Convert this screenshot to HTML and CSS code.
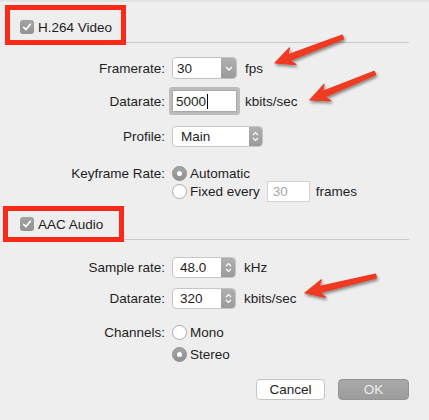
FILE: index.html
```html
<!DOCTYPE html>
<html>
<head>
<meta charset="utf-8">
<link rel="stylesheet" href="styles.css">
</head>
<body>
<div class="win">
  <div class="head head1">
    <label class="hl hl1"><span class="cb"><svg width="10" height="10" viewBox="0 0 10 10"><path d="M1.6 5.3 L4 7.6 L8.4 2.2" fill="none" stroke="#fff" stroke-width="1.6" stroke-linecap="round" stroke-linejoin="round"/></svg></span>H.264 Video</label>
  </div>

  <div class="row r1">
    <span class="lbl">Framerate:</span>
    <div class="combo"><span class="val">30</span><span class="cbtn"><svg width="8" height="5" viewBox="0 0 8 5"><path d="M1 1 L4 4 L7 1" fill="none" stroke="#fff" stroke-width="1.3"/></svg></span></div>
    <span class="unit">fps</span>
  </div>

  <div class="row r2">
    <span class="lbl">Datarate:</span>
    <div class="field focus"><span class="val">5000</span><span class="caret"></span></div>
    <span class="unit">kbits/sec</span>
  </div>

  <div class="row r3">
    <span class="lbl">Profile:</span>
    <div class="popup"><span class="val">Main</span><span class="cbtn"><svg width="7" height="11" viewBox="0 0 7 11"><path d="M1 4 L3.5 1.5 L6 4 M1 7 L3.5 9.5 L6 7" fill="none" stroke="#fff" stroke-width="1.2"/></svg></span></div>
  </div>

  <div class="row r4">
    <span class="lbl">Keyframe Rate:</span>
    <span class="radio on"></span><span class="rtext">Automatic</span>
  </div>

  <div class="row r5">
    <span class="lbl"></span>
    <span class="radio"></span><span class="rtext">Fixed every</span>
    <div class="small">30</div>
    <span class="unit2">frames</span>
  </div>

  <div class="head head2">
    <label class="hl hl2"><span class="cb"><svg width="10" height="10" viewBox="0 0 10 10"><path d="M1.6 5.3 L4 7.6 L8.4 2.2" fill="none" stroke="#fff" stroke-width="1.6" stroke-linecap="round" stroke-linejoin="round"/></svg></span>AAC Audio</label>
  </div>

  <div class="row r6">
    <span class="lbl">Sample rate:</span>
    <div class="stepper"><span class="val">48.0</span><span class="cbtn"><svg width="7" height="11" viewBox="0 0 7 11"><path d="M1 4 L3.5 1.5 L6 4 M1 7 L3.5 9.5 L6 7" fill="none" stroke="#fff" stroke-width="1.2"/></svg></span></div>
    <span class="unit">kHz</span>
  </div>

  <div class="row r7">
    <span class="lbl">Datarate:</span>
    <div class="stepper"><span class="val">320</span><span class="cbtn"><svg width="7" height="11" viewBox="0 0 7 11"><path d="M1 4 L3.5 1.5 L6 4 M1 7 L3.5 9.5 L6 7" fill="none" stroke="#fff" stroke-width="1.2"/></svg></span></div>
    <span class="unit">kbits/sec</span>
  </div>

  <div class="row r8">
    <span class="lbl">Channels:</span>
    <span class="radio"></span><span class="rtext">Mono</span>
  </div>

  <div class="row r9">
    <span class="lbl"></span>
    <span class="radio on"></span><span class="rtext">Stereo</span>
  </div>

  <div class="buttons">
    <button class="btn cancel">Cancel</button>
    <button class="btn ok">OK</button>
  </div>
</div>

<svg class="arrows" width="429" height="420" viewBox="0 0 429 420">
  <defs>
    <filter id="sh" x="-20%" y="-40%" width="140%" height="180%">
      <feDropShadow dx="1" dy="2" stdDeviation="1.8" flood-color="#000" flood-opacity="0.45"/>
    </filter>
  </defs>
  <g fill="#ef3a22" stroke="#ef3a22" stroke-width="1.2" stroke-linejoin="round" filter="url(#sh)">
    <polygon points="342.3,35.1 287.9,54.8 289.5,47.8 275,63 295.9,64.6 290.1,60.4 343.7,38.9"/>
    <polygon points="374.2,71.2 322.7,91.4 324.0,84.4 310,100 331.0,101.0 325.0,97.0 375.8,74.8"/>
    <polygon points="375.5,274.1 318.9,286.6 321.4,279.8 305,293 325.6,297.4 320.3,292.4 376.5,277.9"/>
  </g>
</svg>
</body>
</html>
```

FILE: styles.css
```css
html, body {
  margin: 0;
  padding: 0;
}
body {
  width: 429px;
  height: 420px;
  background: #eeeeee;
  font-family: "Liberation Sans", Arial, sans-serif;
  font-size: 13.5px;
  color: #1e1e1e;
  position: relative;
  overflow: hidden;
  box-shadow: inset 0 2px 0 #e2e2e2;
}
.win {
  width: 429px;
  height: 420px;
}
.head {
  margin: 0 20px 0 8px;
  border-bottom: 1px solid #c9c9c9;
}
.head1 {
  padding-top: 10px;
  height: 32px;
}
.head2 {
  padding-top: 9px;
  height: 28px;
}
.hl {
  display: flex;
  align-items: center;
  box-sizing: border-box;
  outline: 5px solid #fb2a18;
  gap: 4px;
}
.hl1 {
  margin-left: 2px;
  width: 111px;
  height: 30px;
  padding-left: 10px;
  padding-top: 4px;
}
.hl2 {
  margin-left: 0;
  width: 111px;
  height: 26px;
  padding-left: 12px;
}
.cb {
  width: 14px;
  height: 14px;
  border-radius: 3px;
  background: linear-gradient(#a3a3a3, #929292);
  display: flex;
  align-items: center;
  justify-content: center;
  flex-shrink: 0;
}
.row {
  display: flex;
  align-items: center;
}
.lbl {
  width: 165px;
  margin-right: 7px;
  text-align: right;
  flex-shrink: 0;
}
.r1 { margin-top: 14px; height: 22px; }
.r2 { margin-top: 11px; height: 22px; }
.r3 { margin-top: 14px; height: 21px; }
.r4 { margin-top: 18px; height: 16px; }
.r5 { margin-top: 0; height: 21px; }
.r6 { margin-top: 17px; height: 21px; }
.r7 { margin-top: 10px; height: 21px; }
.r8 { margin-top: 15px; height: 16px; }
.r9 { margin-top: 6px; height: 16px; }

.combo, .popup, .stepper, .field {
  box-sizing: border-box;
  display: flex;
  align-items: stretch;
  background: #fff;
  flex-shrink: 0;
}
.combo {
  width: 65px;
  height: 22px;
  border: 1px solid #c2c2c2;
  border-radius: 4px;
  overflow: hidden;
}
.popup {
  width: 91px;
  height: 21px;
  border: 1px solid #c6c6c6;
  border-radius: 4px;
  overflow: hidden;
}
.stepper {
  width: 64px;
  height: 21px;
  border: 1px solid #c6c6c6;
  border-radius: 4px;
  overflow: hidden;
}
.val {
  flex: 1;
  display: flex;
  align-items: center;
}
.combo .val { padding-left: 4px; }
.popup .val { padding-left: 8px; }
.stepper .val { padding-left: 7px; }
.cbtn {
  background: linear-gradient(#b0b0b0, #9a9a9a);
  display: flex;
  align-items: center;
  justify-content: center;
}
.combo .cbtn { width: 15px; }
.popup .cbtn { width: 13px; }
.stepper .cbtn { width: 14px; }

.field {
  width: 65px;
  height: 22px;
  border: 1px solid #a8a8a8;
  border-radius: 1px;
  box-shadow: 0 0 0 3px #bcbcbc;
  padding-left: 3px;
}
.field .val { flex: 0 0 auto; }
.caret {
  width: 1px;
  height: 15px;
  background: #000;
  align-self: center;
  margin-left: 1px;
}
.unit {
  margin-left: 8px;
}
.radio {
  width: 15px;
  height: 15px;
  box-sizing: border-box;
  border-radius: 50%;
  border: 1px solid #ababab;
  background: #fff;
  flex-shrink: 0;
  position: relative;
}
.radio.on {
  border: 1px solid #8e8e8e;
  background: linear-gradient(#a6a6a6, #8f8f8f);
}
.radio.on::after {
  content: "";
  position: absolute;
  left: 4px;
  top: 4px;
  width: 5px;
  height: 5px;
  border-radius: 50%;
  background: #fff;
}
.rtext {
  margin-left: 3px;
}
.small {
  box-sizing: border-box;
  width: 43px;
  height: 21px;
  margin-left: 7px;
  border: 1px solid #d2d2d2;
  background: #fff;
  color: #a8a8a8;
  padding-left: 5px;
  display: flex;
  align-items: center;
}
.unit2 {
  margin-left: 6px;
}
.buttons {
  display: flex;
  justify-content: flex-end;
  gap: 13px;
  margin-top: 17px;
  padding-right: 20px;
  height: 21px;
}
.btn {
  box-sizing: border-box;
  height: 21px;
  border-radius: 4px;
  font-family: "Liberation Sans", Arial, sans-serif;
  font-size: 13.5px;
  padding: 0;
  margin: 0;
}
.cancel {
  width: 69px;
  background: #fff;
  border: 1px solid #c4c4c4;
  color: #1e1e1e;
}
.ok {
  width: 71px;
  background: linear-gradient(#a9a9a9, #9c9c9c);
  border: 1px solid #949494;
  color: #eeeeee;
}
.arrows {
  position: absolute;
  left: 0;
  top: 0;
  pointer-events: none;
}
```
